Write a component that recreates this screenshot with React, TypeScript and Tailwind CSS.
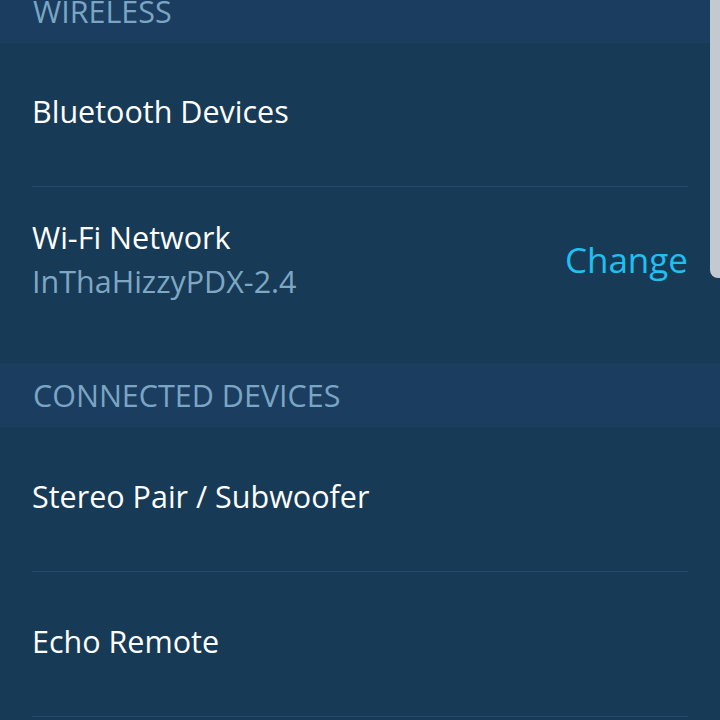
import React from "react";

const font = { fontFamily: '"Open Sans", "Noto Sans", sans-serif' };

function SectionHeader({ label, className = "" }: { label: string; className?: string }) {
  return (
    <div className={`flex h-[64px] items-center bg-[#1b3d5f] px-[33px] ${className}`}>
      <span className="text-[30.5px] leading-none text-[#7aa5c3]">{label}</span>
    </div>
  );
}

function Row({ title, height }: { title: string; height: string }) {
  return (
    <div className="px-[32px]">
      <div className={`flex items-center border-b border-[#25496a] pb-[6px] ${height}`}>
        <span className="text-[30.5px] leading-none text-white">{title}</span>
      </div>
    </div>
  );
}

export default function App() {
  return (
    <div className="relative h-[720px] w-[720px] overflow-hidden bg-[#173a56]" style={font}>
      <SectionHeader label="WIRELESS" className="-mt-[21px]" />
      <Row title="Bluetooth Devices" height="h-[144px]" />
      <div className="flex h-[176px] items-center justify-between px-[32px] pb-[32px]">
        <div className="flex flex-col gap-[14px]">
          <span className="text-[30.5px] leading-none text-white">Wi-Fi Network</span>
          <span className="text-[30.5px] leading-none text-[#7ea7c4]">InThaHizzyPDX-2.4</span>
        </div>
        <span className="text-[35px] leading-none text-[#1ec0f2]">Change</span>
      </div>
      <SectionHeader label="CONNECTED DEVICES" />
      <Row title="Stereo Pair / Subwoofer" height="h-[145px]" />
      <Row title="Echo Remote" height="h-[145px]" />
      <div className="absolute right-0 top-0 h-[278px] w-[10px] rounded-bl-[8px] bg-[#c3c9cf]" />
    </div>
  );
}
